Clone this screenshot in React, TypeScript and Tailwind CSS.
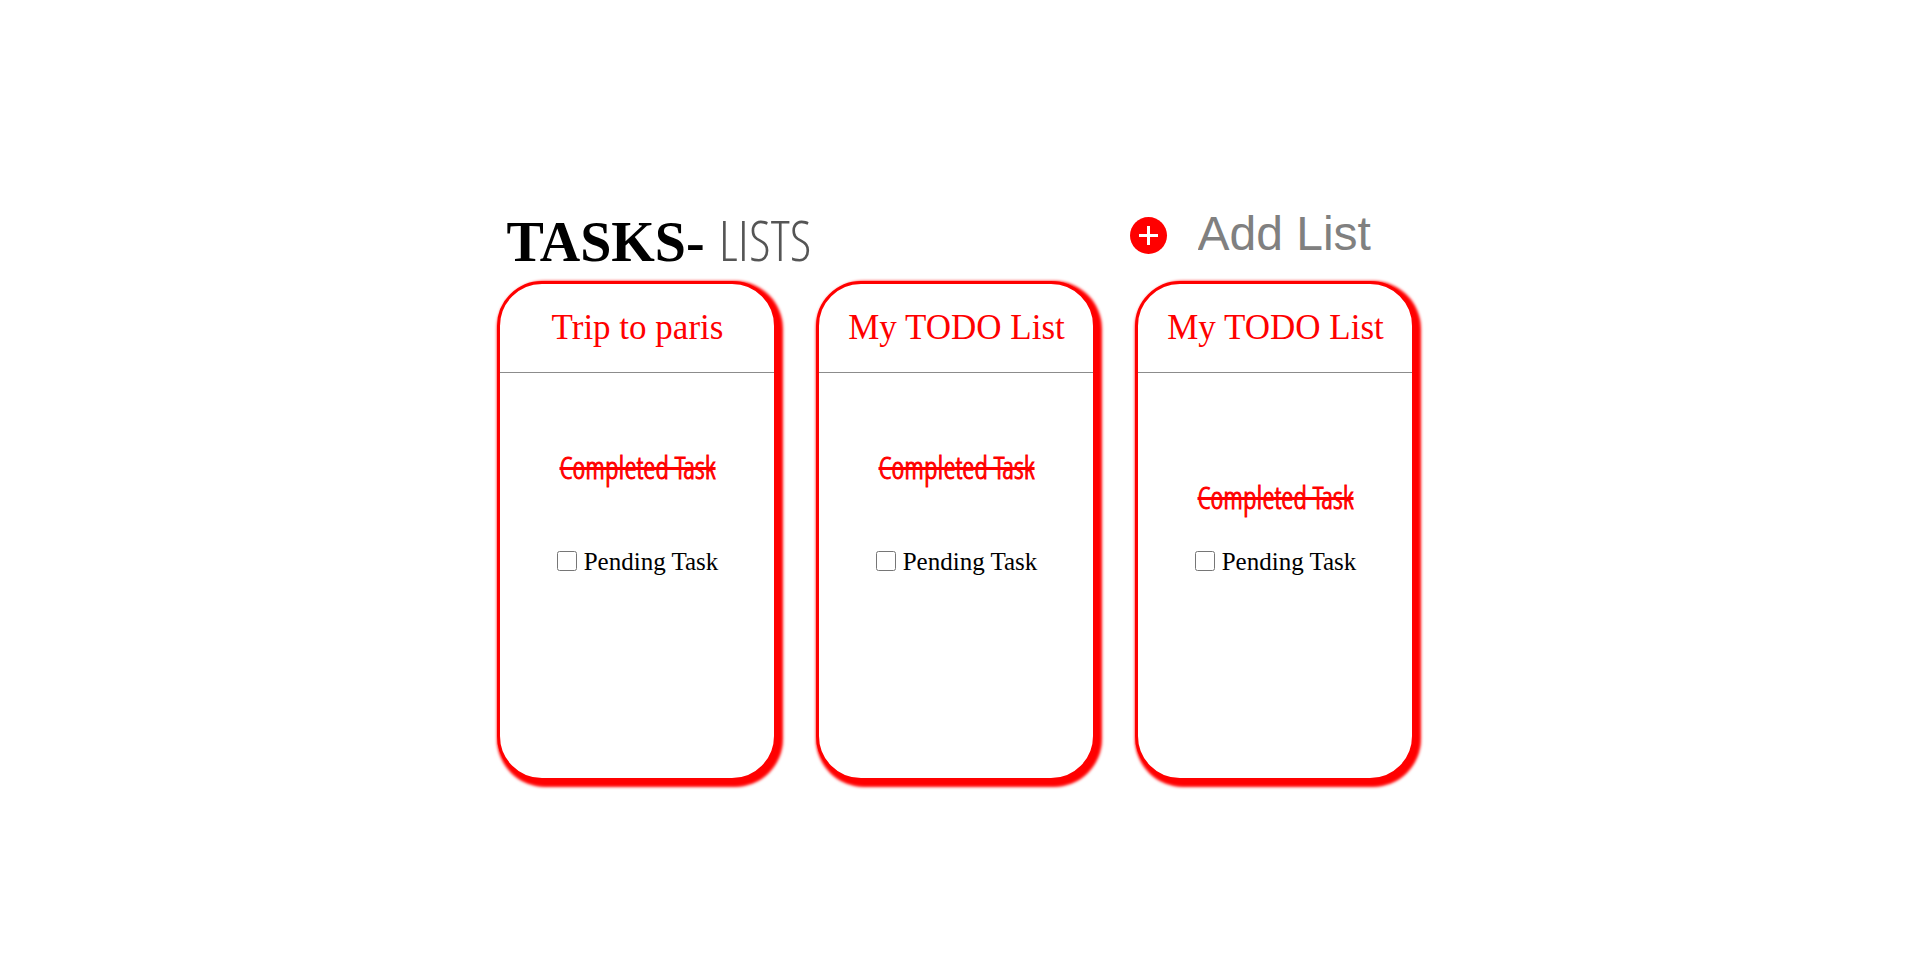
import { useState } from "react";

type TaskList = { title: string; offset: string };

const lists: TaskList[] = [
  { title: "Trip to paris", offset: "pt-[74px] gap-[60px]" },
  { title: "My TODO List", offset: "pt-[74px] gap-[60px]" },
  { title: "My TODO List", offset: "pt-[104px] gap-[30px]" },
];

function ListCard({ title, offset }: TaskList) {
  const [done, setDone] = useState(false);
  return (
    <section className="h-[500px] w-[280px] rounded-[45px] border-[3px] border-[#ff0000] bg-white shadow-[3px_3px_3px_3px_#ff0000]">
      <h2 className="flex h-[89px] items-center justify-center border-b border-[#8c8c8c] pl-0.5 text-[35px] leading-[40px] text-[#ff0000]">
        {title}
      </h2>
      <ul className={`flex flex-col items-center pl-0.5 ${offset}`}>
        <li className="font-['Open_Sans_Condensed_Light','Open_Sans_Condensed','Open_Sans',sans-serif] text-[31px] leading-[40px] font-light text-[#ff0000] line-through decoration-3 [-webkit-text-stroke:1px_#ff0000]">
          Completed Task
        </li>
        <li>
          <label className="flex items-start gap-[7px] text-[25px] leading-[30px] text-black">
            <input
              type="checkbox"
              checked={done}
              onChange={(e) => setDone(e.target.checked)}
              className="mt-1 size-5"
            />
            Pending Task
          </label>
        </li>
      </ul>
    </section>
  );
}

export default function App() {
  return (
    <main className="flex min-h-screen flex-col items-center bg-white pt-[206px] font-['Liberation_Serif',serif]">
      <div className="flex flex-col">
        <header className="flex h-[75px] items-start justify-between pr-2 pl-[10px]">
          <h1 className="flex items-baseline gap-3.5 text-[56px] leading-[68px] font-bold text-black">
            TASKS-
            <span className="font-['Open_Sans_Condensed_Light','Open_Sans_Condensed','Open_Sans',sans-serif] text-[55px] font-light text-[#555555]">
              LISTS
            </span>
          </h1>
          <form className="flex items-end gap-[30px]" onSubmit={(e) => e.preventDefault()}>
            <button type="submit" aria-label="Add list" className="mb-2 size-[38px]">
              <svg viewBox="0 0 38 38" className="size-full">
                <circle cx="18.5" cy="19.5" r="18.5" fill="#ff0000" />
                <path d="M18.5 10v19M9 19.5h19" stroke="#ffffff" strokeWidth="3" />
              </svg>
            </button>
            <input
              type="text"
              aria-label="List name"
              placeholder="Add List"
              className="w-[209px] font-['Liberation_Sans',sans-serif] text-[48px] leading-[56px] outline-none placeholder:text-[#808080]"
            />
          </form>
        </header>
        <div className="flex gap-[39px]">
          {lists.map((list, i) => (
            <ListCard key={i} {...list} />
          ))}
        </div>
      </div>
    </main>
  );
}
